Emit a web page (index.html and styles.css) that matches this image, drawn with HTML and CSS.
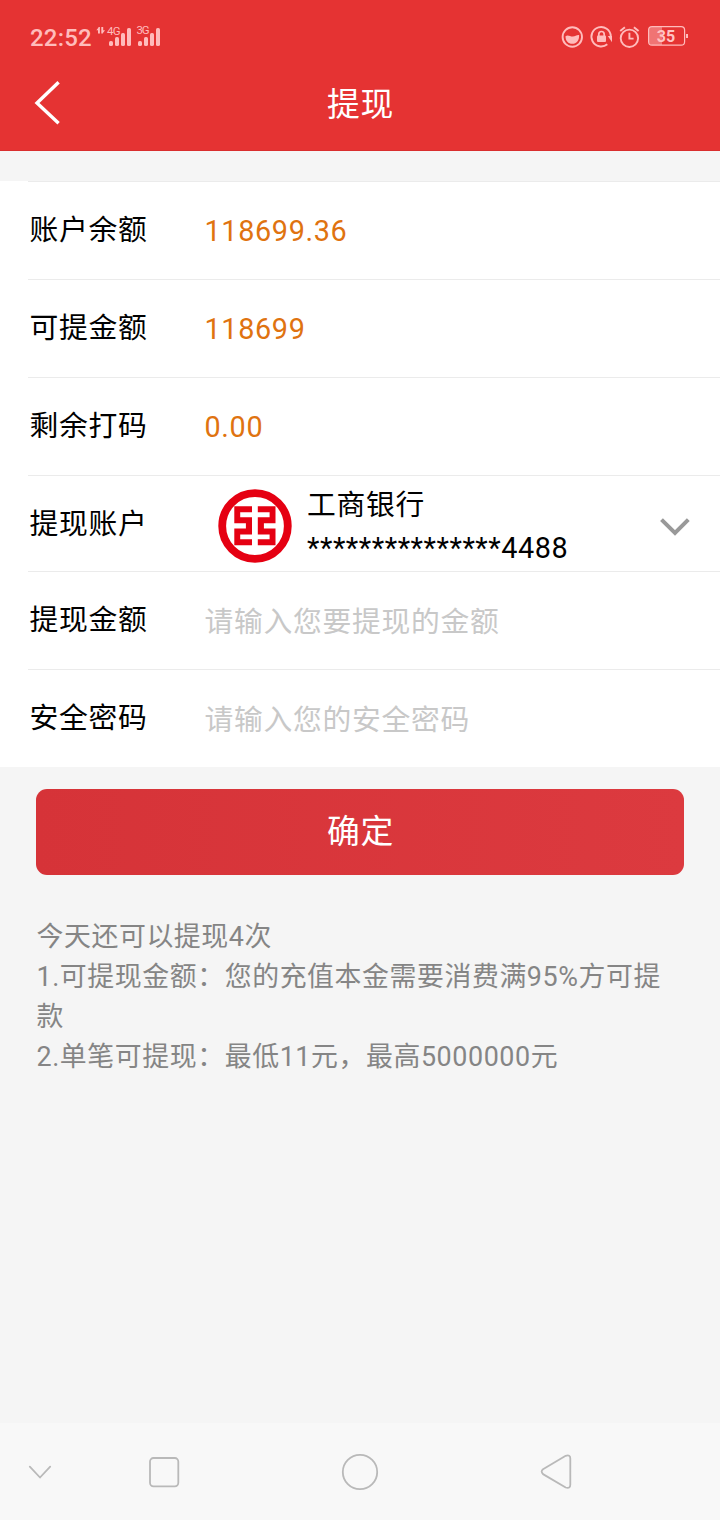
FILE: index.html
```html
<!DOCTYPE html>
<html lang="zh-CN">
<head>
<meta charset="utf-8">
<title>提现</title>
<link rel="stylesheet" href="styles.css">
</head>
<body>
<div class="screen">
  <header class="header">
    <div class="status">
      <span class="time">22:52</span>
      <svg class="signal" width="66" height="24" viewBox="96 24 66 24" fill="#ffbcbc">
        <path d="M96.3 30.2 99 27v6.5h-1v-3.3zM105 30.2 102.2 34v-7h1v3.2zM98.4 27h1.5v6.5h-1.5zM101.3 27h1.5v6.5h-1.5z"/>
        <text class="net" x="107" y="35.2" textLength="13.5">4G</text>
        <rect x="109" y="41" width="4" height="5" rx="1.6"/><rect x="115" y="37" width="4" height="9" rx="1.6"/><rect x="121" y="33" width="4" height="13" rx="1.6"/><rect x="127" y="28" width="4" height="18" rx="1.6"/>
        <text class="net" x="136.5" y="34.4" textLength="13">3G</text>
        <rect x="138" y="41" width="4" height="5" rx="1.6"/><rect x="144" y="37" width="4" height="9" rx="1.6"/><rect x="150" y="33" width="4" height="13" rx="1.6"/><rect x="156" y="28" width="4" height="18" rx="1.6"/>
      </svg>
      <svg class="tray" width="130" height="26" viewBox="560 24 130 26" fill="none" stroke="#ffbcbc" stroke-width="1.9">
        <circle cx="572.3" cy="37" r="9.7"/>
        <path d="M565.5 36.2c2.6-2 4.8.6 7.4.3 2.3-.3 3.8-1.8 6.2-1.5.3 5.5-2.6 8.8-6.8 8.8-4 0-6.8-3-6.8-7.6z" fill="#ffbcbc" stroke="none"/>
        <path d="M607.3 44.2a9.7 9.7 0 1 1 3.5-8.2"/>
        <path d="M607.8 36h4.2v6.3z" fill="#ffbcbc" stroke="none"/>
        <rect x="597" y="35.5" width="9" height="6.6" rx="1" fill="#ffbcbc" stroke="none"/>
        <path d="M598.8 36v-1.8a2.7 2.7 0 0 1 5.4 0V36" stroke-width="1.7"/>
        <circle cx="629.4" cy="38.3" r="8.7"/>
        <path d="M629.4 32.8v5.8h4.2M620.2 31.1l4.7-3.9M633.9 27.2l4.7 3.9"/>
        <path d="M652 27h10v18h-10a3 3 0 0 1-3-3V30a3 3 0 0 1 3-3z" fill="#f07474" stroke="none"/>
        <rect x="648.6" y="26.6" width="36" height="18.6" rx="3.5" stroke-width="1.2"/>
        <path d="M687 34v4" stroke-width="2"/>
        <text class="battery" x="656.8" y="42.2" textLength="18.5" fill="#ffc4c4" stroke="none">35</text>
      </svg>
    </div>
    <div class="titlebar">
      <svg class="back" width="30" height="48" viewBox="32 79 30 48" fill="none" stroke="#fff" stroke-width="3.4"><path d="M58.6 82.2 37 103l21.6 20.3"/></svg>
      <h1 class="title">提现</h1>
    </div>
  </header>

  <main class="form">
    <div class="row"><span class="label">账户余额</span><span class="value">118699.36</span></div>
    <div class="row"><span class="label">可提金额</span><span class="value">118699</span></div>
    <div class="row"><span class="label">剩余打码</span><span class="value">0.00</span></div>
    <div class="row row-bank">
      <span class="label">提现账户</span>
      <svg class="logo" width="74" height="74" viewBox="0 0 74 74">
        <circle cx="37" cy="37" r="32.8" fill="none" stroke="#e50012" stroke-width="7.8"/>
        <g fill="#e50012">
          <path d="M16.3 17.3H34v5.9H22.2v5H34v17.3H22.2v4.8H34v5.9H16.3V39.5h11.6v-5.3H16.3z"/>
          <path d="M57.5 17.3H39.8v5.9h11.8v5H39.8v17.3h11.8v4.8H39.8v5.9h17.7V39.5H45.9v-5.3h11.6z"/>
        </g>
      </svg>
      <div class="bank"><span>工商银行</span><span class="card-number">***************4488</span></div>
      <svg class="chevron" width="32" height="20" viewBox="659 517 32 20" fill="none" stroke="#999" stroke-width="4"><path d="M661.5 519.7 675 533l13.3-13.3"/></svg>
    </div>
    <div class="row"><span class="label">提现金额</span><span class="value placeholder">请输入您要提现的金额</span></div>
    <div class="row"><span class="label">安全密码</span><span class="value placeholder">请输入您的安全密码</span></div>
  </main>

  <button class="submit">确定</button>

  <section class="notes">
    <p>今天还可以提现4次</p>
    <p>1.可提现金额：您的充值本金需要消费满95%方可提款</p>
    <p>2.单笔可提现：最低11元，最高5000000元</p>
  </section>

  <nav class="navbar">
    <svg width="720" height="97" viewBox="0 1423 720 97" fill="none" stroke="#b9b9b9" stroke-width="1.8" stroke-linecap="round" stroke-linejoin="round">
      <path d="M29.8 1466.7 40 1477.5l10.2-10.8"/>
      <rect x="150" y="1458" width="28.3" height="28.3" rx="3.5"/>
      <circle cx="360" cy="1472" r="17.2"/>
      <path d="M565.7 1455.8 543 1469.3q-2.7 2.2 0 4.8l22.7 13.4q4.6 1.5 4.6-2.8V1458.5q0-4.3-4.6-2.7z"/>
    </svg>
  </nav>
</div>
</body>
</html>
```
FILE: styles.css
```css
* { box-sizing: border-box; }

body {
  margin: 0;
  background: #f5f5f5;
  font-family: Roboto, "Noto Sans CJK SC", sans-serif;
  font-weight: 400;
}

svg { display: block; flex: none; }

.screen {
  display: flex;
  flex-direction: column;
  width: 720px;
  height: 1520px;
}

.header {
  height: 151px;
  background: #e53333;
  border-bottom: 1px solid #d92e2e;
}

.status {
  display: flex;
  align-items: flex-start;
  height: 56px;
  padding: 24px 30px 0;
}

.time {
  width: 66px;
  color: #ffbcbc;
  font-size: 24px;
  font-weight: 500;
  letter-spacing: .2px;
  line-height: 28px;
}

.net { font-size: 11.5px; }

.tray { margin-left: auto; }

.battery { font-size: 16px; font-weight: 700; }

.titlebar {
  display: grid;
  grid-template-columns: 30px 1fr 30px;
  align-items: center;
  height: 94px;
  padding: 0 32px;
}

.title {
  margin: 0;
  padding: 4px 0 0 1px;
  color: #fff;
  font-size: 32.8px;
  font-weight: 400;
  letter-spacing: .7px;
  line-height: 48px;
  text-align: center;
}

.form {
  margin-top: 30px;
  padding-left: 28px;
  background: #fff;
}

.row {
  display: flex;
  align-items: center;
  height: 98px;
  padding-left: 1.5px;
  border-top: 1px solid #ebebeb;
  font-size: 28.8px;
  letter-spacing: .7px;
  line-height: 40px;
}

.row-bank { height: 96px; padding-right: 29px; }

.label { width: 175px; color: #000; padding-bottom: 1px; }

.row-bank .label { padding-bottom: 0; }

.value { color: #df7310; padding-top: 1px; letter-spacing: .65px; }

.placeholder { color: #c8c8c8; padding-top: 2px; letter-spacing: .7px; }

.logo { margin: 4px 15px 0 13.5px; }

.bank {
  display: flex;
  flex-direction: column;
  padding-top: 7px;
  line-height: 43px;
  color: #000;
}

.card-number { letter-spacing: .55px; }

.chevron { margin: 6px 0 0 auto; }

.submit {
  height: 86px;
  margin: 22px 36px 0;
  padding: 0 0 8px 1px;
  border: 0;
  border-radius: 11px;
  background: linear-gradient(90deg, #d63338, #dc3a3f);
  color: #fff;
  font-family: inherit;
  font-size: 32.8px;
  letter-spacing: .7px;
}

.notes {
  margin-top: 42px;
  padding: 0 36px 0 36.5px;
  color: #858585;
  font-size: 26.9px;
  letter-spacing: .58px;
  line-height: 40px;
}

.notes p { margin: 0; }

.navbar {
  height: 97px;
  margin-top: auto;
  background: #f8f8f8;
}
```
